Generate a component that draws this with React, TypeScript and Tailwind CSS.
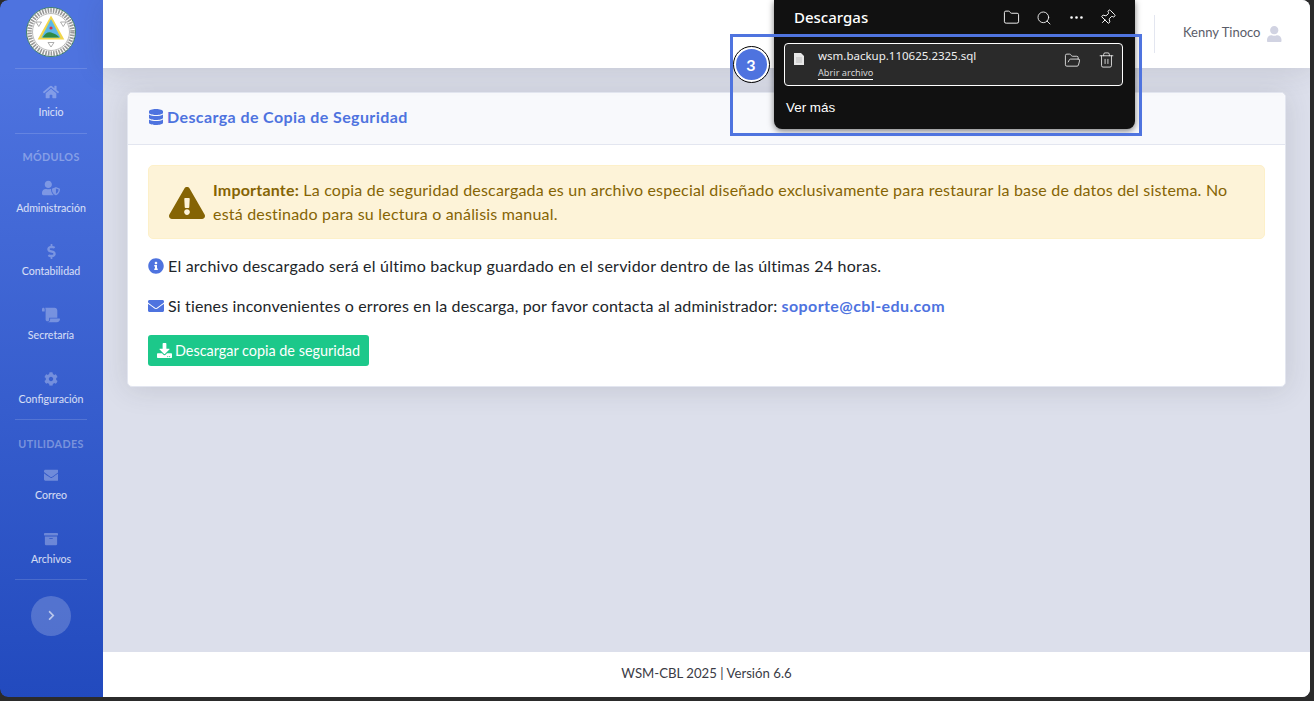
import { Folder, FolderOpen, Ellipsis, Pin, Search, Trash2 } from "lucide-react"
import {
  FaArchive,
  FaChevronRight,
  FaCog,
  FaDatabase,
  FaDollarSign,
  FaDownload,
  FaEnvelope,
  FaExclamationTriangle,
  FaHome,
  FaInfoCircle,
  FaScroll,
  FaUser,
  FaUserShield,
} from "react-icons/fa"
import type { ReactNode } from "react"

function Logo() {
  return (
    <svg viewBox="0 0 50 50" className="w-[50px] h-[50px]">
      <circle cx="25" cy="25" r="24.5" fill="#fff" stroke="#3f7f6a" strokeWidth="1" />
      <circle cx="25" cy="25" r="21.5" fill="none" stroke="#333" strokeWidth="4.5" strokeDasharray="1.6 1.1" opacity="0.5" />
      <circle cx="25" cy="25" r="18.5" fill="#fff" stroke="#555" strokeWidth="0.4" />
      <path d="M10 15l5.500 0-2.750 4.500zM34.500 15l5.500 0-2.750 4.500zM22 35.500h6l-3 4.500z" fill="#fff" stroke="#999" strokeWidth="0.8" />
      <path d="M25 8.500L38.300 32.500H11.700z" fill="#f2d64b" />
      <path d="M25 12L34.500 30.500H15.500z" fill="#5bb7e8" />
      <path d="M16.500 30.500c3-5 6-6 8.500-5s5 1 8.500 5z" fill="#2d8a45" />
      <circle cx="25" cy="21" r="1.600" fill="#d6344a" />
    </svg>
  )
}

function Divider() {
  return <hr className="mx-[15px] border-0 border-t border-white/15" />
}

function Heading({ children }: { children: ReactNode }) {
  return (
    <div className="h-[47px] flex items-center justify-center text-[10.8px] font-bold tracking-[0.3px] text-white/35">
      {children}
    </div>
  )
}

function NavItem({ icon, label }: { icon: ReactNode; label: string }) {
  return (
    <a className="h-[63.7px] flex flex-col items-center pt-[13px] text-white/80">
      <span className="h-[20px] flex items-center justify-center text-white/30">{icon}</span>
      <span className="mt-[3px] text-[10.6px] leading-[14px]">{label}</span>
    </a>
  )
}

function Sidebar() {
  return (
    <aside className="w-[103px] shrink-0 pr-px bg-gradient-to-b from-[#4e73df] from-10% to-[#224abe] flex flex-col rounded-l-lg">
      <div className="h-[68px] flex items-center justify-center pb-[5px]">
        <Logo />
      </div>
      <Divider />
      <NavItem icon={<FaHome className="text-[16px]" />} label="Inicio" />
      <Divider />
      <Heading>MÓDULOS</Heading>
      <div className="-mt-[16px]">
        <NavItem icon={<FaUserShield className="text-[18px]" />} label="Administración" />
        <NavItem icon={<FaDollarSign className="text-[15px]" />} label="Contabilidad" />
        <NavItem icon={<FaScroll className="text-[18px]" />} label="Secretaría" />
        <NavItem icon={<FaCog className="text-[14px]" />} label="Configuración" />
      </div>
      <Divider />
      <Heading>UTILIDADES</Heading>
      <div className="-mt-[15px] -mb-px">
        <NavItem icon={<FaEnvelope className="text-[14.5px]" />} label="Correo" />
        <NavItem icon={<FaArchive className="text-[14px]" />} label="Archivos" />
      </div>
      <Divider />
      <button className="mt-4 mx-auto w-10 h-10 rounded-full bg-white/20 flex items-center justify-center text-white/60 text-[11px]">
        <FaChevronRight />
      </button>
    </aside>
  )
}

function Topbar() {
  return (
    <header className="h-[68px] shrink-0 bg-white shadow-[0_2px_28px_rgba(58,59,69,0.15)] flex items-center justify-end z-10">
      <div className="h-[38px] w-px bg-[#e3e6f0] mr-[28px]" />
      <span className="text-[13px] text-[#5a5c69] mr-[5px] -mt-[2px]">Kenny Tinoco</span>
      <FaUser className="text-[16.5px] text-[#d1d3e2] mr-[28px]" />
    </header>
  )
}

function DownloadsPopup() {
  return (
    <div className="absolute z-20 left-[774px] top-0 w-[361px] h-[129px] rounded-b-lg bg-[#111111] shadow-[0_2px_6px_rgba(0,0,0,0.5)] text-white [font-family:'Noto_Sans',sans-serif]">
      <div className="h-[35px] flex items-center pl-[20px] pr-[19px]">
        <span className="text-[15px] font-medium flex-1">Descargas</span>
        <Folder className="w-[17px] h-[17px] mr-[16px]" strokeWidth={1.3} />
        <Search className="w-[16px] h-[16px] mr-[16px]" strokeWidth={1.3} />
        <Ellipsis className="w-[17px] h-[17px] mr-[14px]" strokeWidth={1.8} />
        <Pin className="w-[17px] h-[17px] rotate-45" strokeWidth={1.3} />
      </div>
      <div className="ml-[10px] mr-[12px] mt-[8px] h-[43px] rounded-[4px] border border-white bg-[#2a2a2a] flex items-center pl-[8px] pr-[7px]">
        <svg viewBox="0 0 12 14" className="w-[12px] h-[14px] mb-[12px]">
          <path d="M1 1h7l3 3v9H1z" fill="#e8e8e8" />
          <path d="M3 6h6M3 8h6M3 10h6" stroke="#a9a9a9" strokeWidth="0.7" />
        </svg>
        <div className="ml-[13px] flex-1 pb-[2px]">
          <div className="text-[11.5px] leading-[16px] text-[#f0f0f0]">wsm.backup.110625.2325.sql</div>
          <div className="mt-[3px] text-[9.2px] leading-[12px] text-[#d6d6d6] border-b border-white w-fit">Abrir archivo</div>
        </div>
        <FolderOpen className="w-[17px] h-[17px] mr-[17px] mb-[8px] text-[#eeeeee]" strokeWidth={1.2} />
        <Trash2 className="w-[17px] h-[18px] mb-[9px] text-[#eeeeee]" strokeWidth={1.2} />
      </div>
      <div className="mt-[12px] ml-[12px] text-[13.4px] [font-family:'Liberation_Sans',sans-serif]">Ver más</div>
    </div>
  )
}

function Annotation() {
  return (
    <>
      <div className="absolute z-30 left-[730px] top-[34px] w-[412px] h-[102px] border-[3px] border-[#4f74df]" />
      <div className="absolute z-30 left-[734px] top-[47px] w-[35px] h-[35px] rounded-full bg-[#4e73df] border-2 border-white outline outline-1 outline-black flex items-center justify-center pr-px text-white text-[16px] font-bold">
        3
      </div>
    </>
  )
}

function BackupCard() {
  return (
    <section className="rounded-[5px] border border-[#e3e6f0] bg-white shadow-[0_2px_28px_rgba(58,59,69,0.15)]">
      <div className="h-[52px] pb-[3px] rounded-t-[5px] border-b border-[#e3e6f0] bg-[#f8f9fc] flex items-center gap-[3px] pl-[20px]">
        <FaDatabase className="text-[16px] text-[#4e73df]" />
        <h1 className="text-[16px] font-bold tracking-[0.4px] text-[#4e73df]">Descarga de Copia de Seguridad</h1>
      </div>
      <div className="pt-[20px] px-[20px] pb-[20px]">
        <div className="h-[74px] rounded-[5px] border border-[#fdf0c9] bg-[#fdf3d8] flex items-center pb-[1px] pl-[20px] pr-[20px] text-[#856404]">
          <FaExclamationTriangle className="shrink-0 text-[36px] mr-[8px] mt-[2px]" />
          <p className="text-[16px] tracking-[0.2px] leading-[24px]">
            <b className="font-bold">Importante:</b> La copia de seguridad descargada es un archivo especial diseñado exclusivamente para restaurar la base de datos del sistema. No está destinado para su lectura o análisis manual.
          </p>
        </div>
        <p className="mt-[15px] h-[24px] flex items-center gap-[4px] text-[16px] tracking-[0.22px] text-[#212529]">
          <FaInfoCircle className="text-[16px] text-[#4e73df]" />
          El archivo descargado será el último backup guardado en el servidor dentro de las últimas 24 horas.
        </p>
        <p className="mt-[16px] h-[24px] flex items-center gap-[4px] text-[16px] tracking-[0.16px] text-[#212529]">
          <FaEnvelope className="text-[16px] text-[#4e73df]" />
          <span>
            Si tienes inconvenientes o errores en la descarga, por favor contacta al administrador:{" "}
            <a className="font-bold tracking-[0.4px] text-[#4e73df]">soporte@cbl-edu.com</a>
          </span>
        </p>
        <button className="mt-[17px] h-[31px] w-[221px] rounded-[3px] bg-[#1cc88a] flex items-center justify-center gap-[3px] text-[14.4px] text-white">
          <FaDownload className="text-[15px]" />
          Descargar copia de seguridad
        </button>
      </div>
    </section>
  )
}

export default function App() {
  return (
    <div className="relative w-[1314px] h-[701px] overflow-hidden bg-[#2b2b2b] pr-[4px] pb-[4px] [font-family:Lato,sans-serif]">
      <div className="flex h-full rounded-lg overflow-hidden">
        <Sidebar />
        <main className="flex-1 flex flex-col bg-[#dcdfeb] min-w-0">
          <Topbar />
          <div className="flex-1 pt-[24px] pl-[24px] pr-[24px]">
            <BackupCard />
          </div>
          <footer className="h-[45px] shrink-0 bg-white flex items-center justify-center pb-[2px] text-[13.2px] text-[#3a3b45]">
            WSM-CBL 2025 | Versión 6.6
          </footer>
        </main>
      </div>
      <DownloadsPopup />
      <Annotation />
    </div>
  )
}
